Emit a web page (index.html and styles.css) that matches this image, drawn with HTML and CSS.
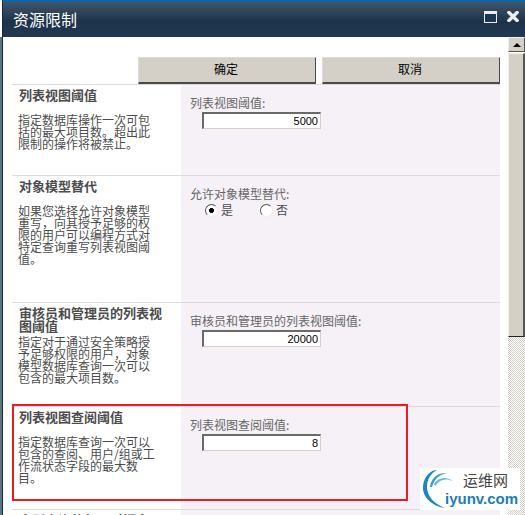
FILE: index.html
```html
<!DOCTYPE html>
<html lang="zh-CN">
<head>
<meta charset="utf-8">
<title>资源限制</title>
<link rel="stylesheet" href="styles.css">
</head>
<body>
<div class="window">
  <header class="titlebar">
    <h1 class="title">资源限制</h1>
    <div class="win-controls">
      <svg class="win-icon" width="13" height="12" viewBox="0 0 13 12"><rect x="0.5" y="0.5" width="12" height="11" fill="#1c3550" stroke="#e8edf2"/><rect x="1" y="1" width="11" height="2" fill="#e8edf2"/></svg>
      <svg class="win-icon" width="12" height="11" viewBox="0 0 12 11"><path d="M2 1.5 L10 9.5 M10 1.5 L2 9.5" stroke="#e8edf2" stroke-width="3.4" stroke-linecap="square"/></svg>
    </div>
  </header>
  <div class="frame">
    <div class="left-edge"></div>
    <main class="content">
      <div class="toolbar">
        <button class="btn" type="button">确定</button>
        <button class="btn" type="button">取消</button>
      </div>
      <section class="row h91">
        <div class="info">
          <h2>列表视图阈值</h2>
          <p>指定数据库操作一次可包<br>括的最大项目数。超出此<br>限制的操作将被禁止。</p>
        </div>
        <div class="field">
          <label class="field-label">列表视图阈值:</label>
          <input class="num" type="text" value="5000" readonly>
        </div>
      </section>
      <section class="row h127">
        <div class="info">
          <h2>对象模型替代</h2>
          <p>如果您选择允许对象模型<br>重写，向其授予足够的权<br>限的用户可以编程方式对<br>特定查询重写列表视图阈<br>值。</p>
        </div>
        <div class="field">
          <label class="field-label">允许对象模型替代:</label>
          <div class="radios">
            <label class="radio-item"><input type="radio" name="ov" checked><span>是</span></label>
            <label class="radio-item"><input type="radio" name="ov"><span>否</span></label>
          </div>
        </div>
      </section>
      <section class="row h104">
        <div class="info">
          <h2>审核员和管理员的列表视<br>图阈值</h2>
          <p>指定对于通过安全策略授<br>予足够权限的用户，对象<br>模型数据库查询一次可以<br>包含的最大项目数。</p>
        </div>
        <div class="field">
          <label class="field-label">审核员和管理员的列表视图阈值:</label>
          <input class="num" type="text" value="20000" readonly>
        </div>
      </section>
      <section class="row h103">
        <div class="info">
          <h2>列表视图查阅阈值</h2>
          <p>指定数据库查询一次可以<br>包含的查阅、用户/组或工<br>作流状态字段的最大数<br>目。</p>
        </div>
        <div class="field">
          <label class="field-label">列表视图查阅阈值:</label>
          <input class="num" type="text" value="8" readonly>
        </div>
      </section>
      <section class="row">
        <div class="info">
          <h2>大型查询的每日时间窗</h2>
        </div>
        <div class="field"></div>
      </section>
    </main>
    <aside class="scrollbar">
      <div class="sb-btn"><span class="sb-arrow"></span></div>
      <div class="sb-track"><div class="sb-thumb"></div></div>
    </aside>
    <div class="highlight"></div>
    <div class="watermark">
      <svg class="wm-logo" width="36" height="42" viewBox="0 0 36 42">
        <path d="M24 40 C10 38 1 28 2 18 C3 8 10 2 16 2 C9 6 6 12 6 19 C6 28 13 36 24 40 Z" fill="#1b86c6"/>
        <path d="M9 19 C10 9 19 3 27 6 C20 5 14 10 11 19 Z" fill="#3a9bd4"/>
        <path d="M13 16 C17 9 25 8 32 13 C25 10 19 11 14 18 Z" fill="#6db6e0"/>
      </svg>
      <span class="wm-cn">运维网</span>
      <span class="wm-en">iyunv.com</span>
    </div>
  </div>
</div>
</body>
</html>
```
FILE: styles.css
```css
* { box-sizing: border-box; }
html, body { margin: 0; padding: 0; height: 100%; overflow: hidden; background: #fff; }
body { font-family: "Noto Sans CJK SC", "Liberation Sans", sans-serif; }

.window { width: 525px; height: 515px; display: flex; flex-direction: column; overflow: hidden; }

.titlebar {
  height: 37px;
  flex: none;
  margin-left: 2px;
  border-top: 2px solid #0b66ae;
  border-left: 1px solid #14263a;
  background: linear-gradient(#42566b 0, #2b4259 11px, #1d3249 20px, #213954 100%);
  display: flex;
  align-items: center;
  justify-content: space-between;
  padding: 0 6px 2px 10px;
}
.title { margin: 0; font-size: 16px; font-weight: 400; color: #fff; line-height: 20px; }
.win-controls { display: flex; align-items: center; gap: 10px; margin-top: -4px; }
.win-icon { display: block; }

.frame { position: relative; flex: 1; display: flex; min-height: 0; }
.left-edge { width: 3px; flex: none; background: linear-gradient(90deg, #5d7684 0, #5d7684 2px, #14263a 2px); }
.content { width: 505px; flex: none; padding: 0 8px 0 9px; background: #fff; overflow: hidden; }

.toolbar { height: 47px; display: flex; justify-content: flex-end; gap: 6px; padding-top: 20px; }
.btn {
  width: 178px;
  height: 27px;
  background: #d4d0c8;
  border: 0;
  border-right: 1px solid #4a4a4a;
  border-bottom: 2px solid #4a4a4a;
  border-top: 1px solid #dedbd5;
  border-left: 1px solid #dedbd5;
  font: 400 12px/20px "Noto Sans CJK SC", sans-serif;
  color: #000;
  padding: 0 2px 2px 0;
}

.row { display: grid; grid-template-columns: 169px 319px; border-top: 1px solid #dcdadc; }
.h91 { height: 91px; }
.h127 { height: 127px; }
.h104 { height: 104px; }
.h103 { height: 103px; }

.info { padding: 3px 0 0 6px; color: #4c4c4c; white-space: nowrap; }
.info h2 { margin: 0 0 4px 1px; min-height: 22px; font-size: 13px; line-height: 13px; font-weight: 700; }
.info p { margin: 0; font-size: 12px; line-height: 12px; }

.field { background: #f5f1f6; padding: 11px 0 0 9px; height: 100%; }
.field-label { display: block; font-size: 12px; line-height: 14px; color: #666; }
.num {
  display: block;
  margin: 2px 0 0 12px;
  width: 119px;
  height: 17px;
  padding: 0 2px 0 0;
  background: #fff;
  border-style: solid;
  border-width: 2px 1px 1px 2px;
  border-color: #6a6a6a #d4d0c8 #d4d0c8 #6a6a6a;
  outline: 0;
  text-align: right;
  font: 11px "Liberation Sans", sans-serif;
  color: #000;
}

.radios { display: flex; gap: 30px; padding: 1px 0 0 15px; }
.radio-item { display: flex; align-items: center; gap: 3px; font-size: 12px; line-height: 16px; color: #4c4c4c; width: 25px; }
.radio-item input {
  appearance: none;
  width: 13px; height: 13px; margin: 0; flex: none;
  border-radius: 50%;
  background: #fff;
  border: 1px solid;
  border-color: #555 #eee #eee #555;
}
.radio-item input:checked { background: radial-gradient(circle, #000 0 2.2px, #fff 2.8px); }

.scrollbar { width: 17px; flex: none; display: flex; flex-direction: column; background: #fff; }
.sb-btn {
  height: 15px; flex: none;
  background: #d4d0c8;
  border-top: 1px solid #f2f0ec;
  border-left: 1px solid #f2f0ec;
  border-right: 1px solid #555;
  border-bottom: 1px solid #555;
  display: flex; align-items: center; justify-content: center;
}
.sb-arrow { width: 0; height: 0; border: 4px solid transparent; border-top: 0; border-bottom-color: #000; }
.sb-track {
  flex: 1;
  margin-top: 1px;
  background-image: repeating-conic-gradient(#d4d0c8 0 25%, #fff 0 50%);
  background-size: 2px 2px;
}
.sb-thumb {
  height: 284px;
  background: #d4d0c8;
  border-top: 1px solid #f2f0ec;
  border-left: 1px solid #f2f0ec;
  border-right: 2px solid #555;
  border-bottom: 1px solid #222;
}

.highlight {
  position: absolute;
  left: 12px; top: 367px;
  width: 396px; height: 97px;
  border: 2px solid #ed1c24;
}
.watermark {
  position: absolute;
  left: 420px; top: 431px;
  width: 100px; height: 42px;
  background: #fff;
}
.wm-logo { position: absolute; left: 1px; top: 0; }
.wm-cn { position: absolute; left: 43px; top: 3px; font-size: 15px; line-height: 18px; color: #444; }
.wm-en { position: absolute; left: 25px; top: 22px; font: 700 15px/18px "Liberation Sans", sans-serif; color: #1b7db8; }
```
